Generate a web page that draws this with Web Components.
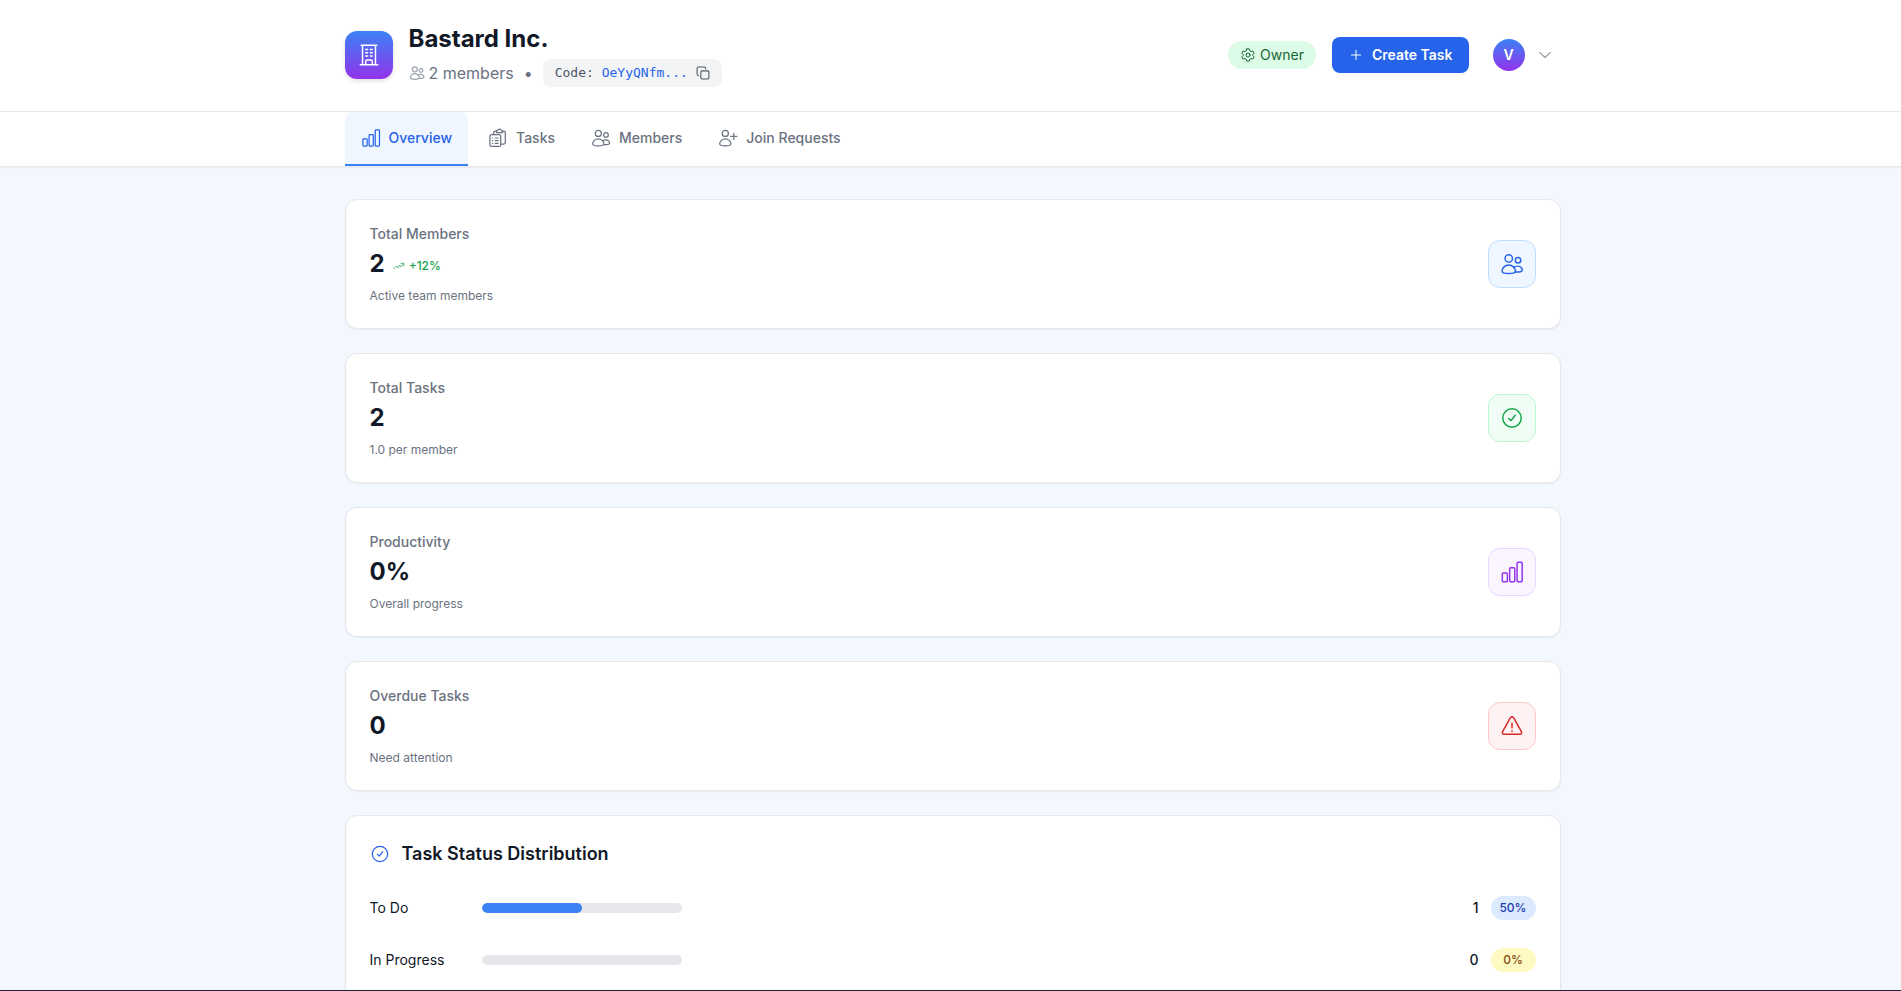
<!DOCTYPE html>
<html lang="en">
<head>
<meta charset="utf-8">
<meta name="viewport" content="width=device-width, initial-scale=1">
<title>Bastard Inc.</title>
<style>
  *, *::before, *::after { box-sizing: border-box }

  body {
    margin: 0;
    height: 100vh;
    overflow: hidden;
    border-bottom: 1px solid #1f2233;
    background: #f3f7fe;
    color: #111827;
    font: 14px/20px Inter, "Liberation Sans", sans-serif;
  }

  main {
    display: grid;
    gap: 24px;
    padding-top: 32px;
  }
</style>
</head>
<body>

<org-header name="Bastard Inc." members="2 members" code="OeYyQNfm..." role-name="Owner" initial="V"></org-header>

<tab-bar>
  <tab-item icon="chart" label="Overview" active></tab-item>
  <tab-item icon="clipboard" label="Tasks"></tab-item>
  <tab-item icon="users" label="Members"></tab-item>
  <tab-item icon="user-plus" label="Join Requests"></tab-item>
</tab-bar>

<page-container>
  <main>
    <stat-card label="Total Members" value="2" trend="+12%" icon="users" tone="blue">Active team members</stat-card>
    <stat-card label="Total Tasks" value="2" icon="check" tone="green">1.0 per member</stat-card>
    <stat-card label="Productivity" value="0%" icon="chart" tone="purple">Overall progress</stat-card>
    <stat-card label="Overdue Tasks" value="0" icon="warning" tone="red">Need attention</stat-card>

    <status-card heading="Task Status Distribution">
      <status-row label="To Do" count="1" percent="50" tone="blue"></status-row>
      <status-row label="In Progress" count="0" percent="0" tone="yellow"></status-row>
    </status-card>
  </main>
</page-container>

<script>
const ICONS = {
  building: `
    <path d="M2.500 22.500h19M3.500 1.500h17M5 1.500v21M19 1.500v21M8.500 22.500v-4q0-1 1-1h5q1 0 1 1v4"/>
    <path d="M8.500 6h2M13.500 6h2M8.500 9.500h2M13.500 9.500h2M8.500 13h2M13.500 13h2"/>`,
  users: `
    <circle cx="8.500" cy="6" r="4"/>
    <path d="M8.500 13C4.500 13 1.200 16.500 1.200 19.500C1.200 21.500 4 22.300 8.500 22.300S15.800 21.500 15.800 19.500C15.800 16.500 12.500 13 8.500 13Z"/>
    <circle cx="18.500" cy="8" r="3"/>
    <path d="M14 15.800C15 14.900 16.700 14.300 18.500 14.300C21.200 14.300 23.200 16.700 23.200 18.600C23.200 20.300 20.500 20.800 15.800 20.600"/>`,
  "user-plus": `
    <circle cx="8.500" cy="6" r="4"/>
    <path d="M8.500 13C4.500 13 1.200 16.500 1.200 19.500C1.200 21.500 4 22.300 8.500 22.300S15.800 21.500 15.800 19.500C15.800 16.500 12.500 13 8.500 13Z"/>
    <path d="M19.500 6v8M15.500 10h8"/>`,
  chart: `
    <rect x="1.500" y="13" width="5.500" height="9.500" rx="1"/>
    <rect x="9.500" y="7.500" width="5.500" height="15" rx="1"/>
    <rect x="17.500" y="1.500" width="5.500" height="21" rx="1"/>`,
  clipboard: `
    <path d="M3.500 7.500h10q2 0 2 2v11.500q0 2-2 2h-10q-2 0-2-2V9.500q0-2 2-2z"/>
    <path d="M6.500 7.500V5q0-2 2-2h1.500M17.500 3H19.500q2 0 2 2v13q0 2-2 2h-4"/>
    <path d="M10 5V3.500Q10 2.500 11.500 2.500Q12 .5 14 .5T16.500 2.500Q18 2.500 18 3.500V5z"/>
    <path d="M4.800 12h.4M8.500 12h3.500M4.800 15.500h.4M8.500 15.500h3.500M4.800 19h.4M8.500 19h3.500"/>`,
  check: `
    <circle cx="12" cy="12" r="10"/>
    <path d="M8.500 12.500l2.500 2.300l4.500-5.800"/>`,
  warning: `
    <path d="M10.200 3.200Q12 .8 13.800 3.200L22.200 18Q23.200 21 20.500 21h-17Q.8 21 1.800 18Z"/>
    <path d="M12 9v5M12 17v.6"/>`,
  gear: `
    <circle cx="12" cy="12" r="3.200"/>
    <path d="M10 2h4l.8 3l2.200 1.300l3-.8l2 3.500l-2.200 2.200v1.600L22 15l-2 3.500l-3-.8l-2.200 1.300L14 22h-4l-.8-3L7 17.700l-3 .8L2 15l2.200-2.200v-1.600L2 9l2-3.500l3 .8L9.200 5Z"/>`,
  plus: `<path d="M12 4.500v15M4.500 12h15"/>`,
  chevron: `<path d="M3.500 8l8.500 8l8.500-8"/>`,
  copy: `
    <rect x="8" y="8" width="15" height="15" rx="2"/>
    <path d="M4 17c-1.600 0-3-1.400-3-3V4c0-1.600 1.400-3 3-3h10c1.600 0 3 1.400 3 3"/>`,
  trend: `<path d="M1 18l5-6l4 4l3-6l3 4l6-7M16.500 6.500l5.500-.5l.5 5.500"/>`,
};

function icon (name, size, stroke = 1.6) {
  return `<svg width="${size}" height="${size}" viewBox="-1 -1 26 26" fill="none" stroke="currentColor"
    stroke-width="${stroke}" stroke-linecap="round" stroke-linejoin="round" aria-hidden="true">${ICONS[name]}</svg>`;
}

const BASE = `
  *, *::before, *::after { box-sizing: border-box }
  :host { display: block; box-sizing: border-box }
  svg { display: block; flex: none }
  h1, h2, p { margin: 0 }
  button { font: inherit; border: 0; padding: 0; background: none; color: inherit; cursor: pointer }
`;

const CARD = `
  :host {
    background: white;
    border: 1px solid #e5e7eb;
    border-radius: 12px;
    padding: 24px;
    box-shadow: 0 1px 2px #0000000d;
  }
`;

class BaseElement extends HTMLElement {
  connectedCallback () {
    if (this.shadowRoot)
      return;

    this.attachShadow({mode: "open"}).innerHTML = this.render();
  }

  attr (name) {
    return this.getAttribute(name) || "";
  }
}

class PageContainer extends BaseElement {
  render () {
    return `<style>
      ${BASE}
      :host {
        max-width: 1284px;
        margin: 0 auto;
        padding: 0 32px 0 36px;
      }
    </style>
    <slot></slot>`;
  }
}

class OrgHeader extends BaseElement {
  render () {
    return `<style>
      ${BASE}
      :host {
        background: white;
        border-bottom: 1px solid #e5e7eb;
      }

      .bar, .org, .meta, .members, .code, .actions, .role, .create, .user {
        display: flex;
        align-items: center;
      }

      .bar {
        justify-content: space-between;
        padding: 23px 0 24px;
      }

      .org { gap: 16px }

      .logo {
        display: grid;
        place-items: center;
        width: 48px;
        height: 48px;
        border-radius: 12px;
        background: linear-gradient(#3b82f6, #9333ea);
        color: white;
        box-shadow: 0 2px 4px #0002;
      }

      h1 {
        font-size: 24px;
        line-height: 32px;
        font-weight: 700;
      }

      .meta {
        gap: 10px;
        margin-top: 4px;
        font-size: 16px;
        line-height: 24px;
        color: #6b7280;
      }

      .members { gap: 4px }
      .members svg { color: #9ca3af }

      .code {
        gap: 8px;
        height: 28px;
        padding: 0 12px;
        border-radius: 8px;
        background: #f3f4f6;
        color: #4b5563;
        font: 13px/20px "DejaVu Sans Mono", monospace;
      }

      code { font: inherit; color: #2563eb }

      .actions { gap: 16px }

      .role {
        gap: 4px;
        height: 28px;
        padding: 0 12px;
        border-radius: 14px;
        background: #dcfce7;
        color: #166534;
      }

      .create {
        gap: 8px;
        height: 36px;
        padding: 0 16px;
        border-radius: 8px;
        background: #2563eb;
        color: white;
        font-weight: 600;
      }

      .user {
        gap: 12px;
        padding: 0 8px;
        color: #9ca3af;
      }

      .avatar {
        display: grid;
        place-items: center;
        width: 32px;
        height: 32px;
        border-radius: 50%;
        background: linear-gradient(#3b82f6, #9333ea);
        color: white;
        font-weight: 600;
      }
    </style>

    <page-container>
      <header class="bar">
        <div class="org">
          <div class="logo">${icon("building", 24)}</div>
          <div>
            <h1>${this.attr("name")}</h1>
            <div class="meta">
              <span class="members">${icon("users", 16, 2)}${this.attr("members")}</span>
              <span>•</span>
              <span class="code">
                <span>Code: <code>${this.attr("code")}</code></span>
                <button aria-label="Copy code">${icon("copy", 14, 2)}</button>
              </span>
            </div>
          </div>
        </div>
        <div class="actions">
          <span class="role">${icon("gear", 16)}${this.attr("role-name")}</span>
          <button class="create">${icon("plus", 16)}Create Task</button>
          <button class="user" aria-label="Account">
            <span class="avatar">${this.attr("initial")}</span>
            ${icon("chevron", 16, 2)}
          </button>
        </div>
      </header>
    </page-container>`;
  }
}

class TabBar extends BaseElement {
  render () {
    return `<style>
      ${BASE}
      :host {
        background: white;
        border-bottom: 1px solid #e5e7eb;
        box-shadow: 0 1px 2px #0000000d;
      }
      nav { display: flex; gap: 4px }
    </style>
    <page-container><nav><slot></slot></nav></page-container>`;
  }
}

class TabItem extends BaseElement {
  render () {
    return `<style>
      ${BASE}
      button {
        display: flex;
        align-items: center;
        gap: 8px;
        padding: 16px;
        border-bottom: 2px solid transparent;
        border-radius: 8px 8px 0 0;
        color: #6b7280;
        font-weight: 500;
      }
      :host([active]) button {
        background: #eff6ff;
        border-color: #3b82f6;
        border-radius: 8px 8px 0 0;
        color: #2563eb;
      }
    </style>
    <button>${icon(this.attr("icon"), 20)}${this.attr("label")}</button>`;
  }
}

class StatCard extends BaseElement {
  render () {
    const trend = this.attr("trend");

    return `<style>
      ${BASE}
      ${CARD}
      :host {
        display: flex;
        align-items: center;
        justify-content: space-between;
      }

      .label { color: #6b7280; font-weight: 500 }

      .figure {
        display: flex;
        align-items: center;
        gap: 8px;
        margin: 4px 0 8px;
        font-size: 24px;
        line-height: 32px;
        font-weight: 700;
      }

      .trend {
        display: flex;
        align-items: center;
        gap: 4px;
        padding-top: 4px;
        color: #16a34a;
        font-size: 12px;
        line-height: 16px;
        font-weight: 500;
      }

      .note { color: #6b7280; font-size: 12px; line-height: 16px }

      .badge {
        display: grid;
        place-items: center;
        width: 48px;
        height: 48px;
        border: 1px solid;
        border-radius: 12px;
      }
      .blue   { background: #eff6ff; border-color: #bfdbfe; color: #2563eb }
      .green  { background: #f0fdf4; border-color: #bbf7d0; color: #16a34a }
      .purple { background: #faf5ff; border-color: #e9d5ff; color: #9333ea }
      .red    { background: #fef2f2; border-color: #fecaca; color: #dc2626 }
    </style>

    <div>
      <p class="label">${this.attr("label")}</p>
      <div class="figure">
        <span>${this.attr("value")}</span>
        ${trend && `<span class="trend">${icon("trend", 12)}${trend}</span>`}
      </div>
      <p class="note"><slot></slot></p>
    </div>
    <div class="badge ${this.attr("tone")}">${icon(this.attr("icon"), 24)}</div>`;
  }
}

class StatusCard extends BaseElement {
  render () {
    return `<style>
      ${BASE}
      ${CARD}
      h2 {
        display: flex;
        align-items: center;
        gap: 12px;
        margin-bottom: 14px;
        font-size: 18px;
        line-height: 28px;
        font-weight: 600;
      }
      svg { color: #2563eb }
    </style>
    <h2>${icon("check", 20)}${this.attr("heading")}</h2>
    <slot></slot>`;
  }
}

class StatusRow extends BaseElement {
  render () {
    return `<style>
      ${BASE}
      :host {
        display: flex;
        align-items: center;
        padding: 14px 0;
      }

      label { width: 112px }

      progress {
        appearance: none;
        width: 200px;
        height: 10px;
        border: 0;
        border-radius: 5px;
        overflow: hidden;
        background: #e5e7eb;
      }
      progress::-webkit-progress-bar { background: #e5e7eb }
      progress::-webkit-progress-value { background: #3b82f6; border-radius: 5px }

      .count { margin-left: auto; font-weight: 500 }

      .badge {
        min-width: 45px;
        margin-left: 12px;
        padding: 4px 8px;
        border-radius: 12px;
        font-size: 12px;
        line-height: 16px;
        font-weight: 500;
        text-align: center;
      }
      .blue   { background: #dbeafe; color: #1e40af }
      .yellow { background: #fef9c3; color: #854d0e }
    </style>

    <label for="bar">${this.attr("label")}</label>
    <progress id="bar" max="100" value="${this.attr("percent")}"></progress>
    <span class="count">${this.attr("count")}</span>
    <span class="badge ${this.attr("tone")}">${this.attr("percent")}%</span>`;
  }
}

customElements.define("page-container", PageContainer);
customElements.define("org-header", OrgHeader);
customElements.define("tab-bar", TabBar);
customElements.define("tab-item", TabItem);
customElements.define("stat-card", StatCard);
customElements.define("status-card", StatusCard);
customElements.define("status-row", StatusRow);
</script>
</body>
</html>
